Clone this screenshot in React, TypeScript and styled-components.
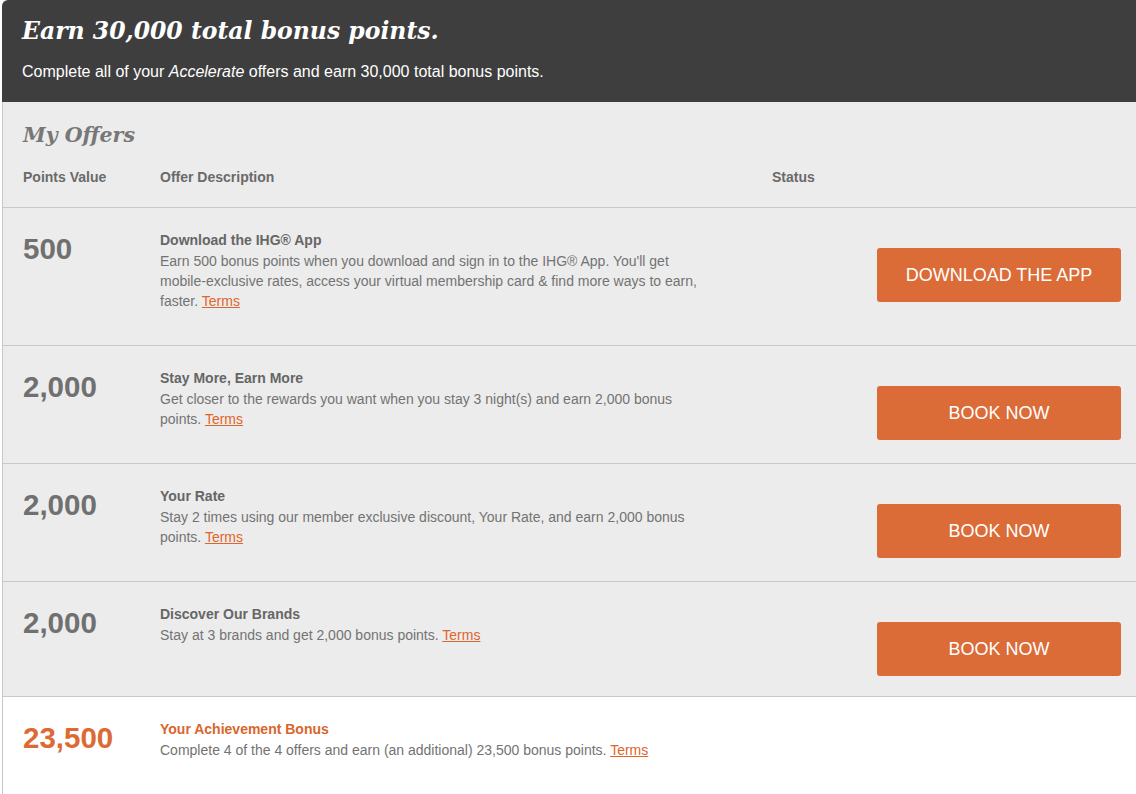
import React from "react";
import styled, { createGlobalStyle } from "styled-components";

const GlobalStyle = createGlobalStyle`
  html, body {
    margin: 0;
    padding: 0;
    background: #ffffff;
  }
  body {
    font-family: "Liberation Sans", Arial, sans-serif;
  }
`;

interface IOffer {
  points: string;
  title: string;
  text: string;
  button?: string;
  bonus?: boolean;
}

const offers: IOffer[] = [
  {
    points: "500",
    title: "Download the IHG® App",
    text:
      "Earn 500 bonus points when you download and sign in to the IHG® App. You'll get mobile-exclusive rates, access your virtual membership card & find more ways to earn, faster.",
    button: "Download the App",
  },
  {
    points: "2,000",
    title: "Stay More, Earn More",
    text:
      "Get closer to the rewards you want when you stay 3 night(s) and earn 2,000 bonus points.",
    button: "Book Now",
  },
  {
    points: "2,000",
    title: "Your Rate",
    text:
      "Stay 2 times using our member exclusive discount, Your Rate, and earn 2,000 bonus points.",
    button: "Book Now",
  },
  {
    points: "2,000",
    title: "Discover Our Brands",
    text: "Stay at 3 brands and get 2,000 bonus points.",
    button: "Book Now",
  },
  {
    points: "23,500",
    title: "Your Achievement Bonus",
    text:
      "Complete 4 of the 4 offers and earn (an additional) 23,500 bonus points.",
    bonus: true,
  },
];

const Page = styled.div`
  margin-left: 2px;
  min-height: 794px;
  display: flex;
  flex-direction: column;
`;

const Banner = styled.div`
  background: #3e3e3e;
  border-top-left-radius: 6px;
  padding: 15px 20px 20px;
  color: #ffffff;
`;

const BannerTitle = styled.h1`
  margin: 0;
  font-family: "DejaVu Serif", Georgia, serif;
  font-style: italic;
  font-weight: bold;
  font-size: 23.5px;
  line-height: 32px;
`;

const BannerText = styled.p`
  margin: 15px 0 0;
  font-size: 16px;
  line-height: 20px;
`;

const Offers = styled.div`
  flex: 1;
  display: flex;
  flex-direction: column;
  border-left: 1px solid #c8c8c8;
  background: #ececec;
`;

const OffersTitle = styled.h2`
  margin: 0;
  padding: 20px 20px 0;
  font-family: "DejaVu Serif", Georgia, serif;
  font-style: italic;
  font-weight: bold;
  font-size: 20.5px;
  line-height: 26px;
  color: #777777;
`;

const Grid = styled.div`
  display: grid;
  grid-template-columns: 137px 612px 1fr;
  padding: 0 15px 0 20px;
`;

const HeadRow = styled(Grid)`
  margin-top: 20px;
  padding-bottom: 21px;
  border-bottom: 1px solid #c8c8c8;
`;

const HeadCell = styled.div`
  font-size: 14px;
  font-weight: bold;
  line-height: 18px;
  color: #6a6a6a;
`;

const Row = styled(Grid)<{ $bonus?: boolean }>`
  background: ${(p) => (p.$bonus ? "#ffffff" : "#ececec")};
  border-bottom: ${(p) => (p.$bonus ? "none" : "1px solid #c8c8c8")};
  flex: ${(p) => (p.$bonus ? 1 : "none")};
`;

const Points = styled.div<{ $bonus?: boolean }>`
  padding-top: 25px;
  font-size: 29.5px;
  font-weight: bold;
  line-height: 32px;
  color: ${(p) => (p.$bonus ? "#dd6a33" : "#707070")};
`;

const Description = styled.div`
  padding: 21px 0 34px;
  max-width: 542px;
  font-size: 14px;
  line-height: 20px;
  color: #737373;
`;

const OfferTitle = styled.div<{ $bonus?: boolean }>`
  font-weight: bold;
  line-height: 22px;
  color: ${(p) => (p.$bonus ? "#d9652c" : "#666666")};
`;

const Terms = styled.a`
  color: #e0652b;
  text-decoration: underline;
  cursor: pointer;
`;

const Action = styled.div`
  display: flex;
  justify-content: flex-end;
  align-items: flex-start;
  padding: 40px 0 20px;
`;

const ActionButton = styled.button`
  width: 244px;
  height: 54px;
  border: none;
  border-radius: 3px;
  background: #db6b37;
  color: #ffffff;
  font-family: "Liberation Sans", Arial, sans-serif;
  font-size: 18px;
  text-transform: uppercase;
  cursor: pointer;
`;

export default function App() {
  return (
    <>
      <GlobalStyle />
      <Page>
        <Banner>
          <BannerTitle>Earn 30,000 total bonus points.</BannerTitle>
          <BannerText>
            Complete all of your <i>Accelerate</i> offers and earn 30,000 total
            bonus points.
          </BannerText>
        </Banner>
        <Offers>
          <OffersTitle>My Offers</OffersTitle>
          <HeadRow>
            <HeadCell>Points Value</HeadCell>
            <HeadCell>Offer Description</HeadCell>
            <HeadCell>Status</HeadCell>
          </HeadRow>
          {offers.map((offer, i) => (
            <Row key={i} $bonus={offer.bonus}>
              <Points $bonus={offer.bonus}>{offer.points}</Points>
              <Description>
                <OfferTitle $bonus={offer.bonus}>{offer.title}</OfferTitle>
                {offer.text} <Terms>Terms</Terms>
              </Description>
              {offer.button ? (
                <Action>
                  <ActionButton>{offer.button}</ActionButton>
                </Action>
              ) : (
                <div />
              )}
            </Row>
          ))}
        </Offers>
      </Page>
    </>
  );
}
